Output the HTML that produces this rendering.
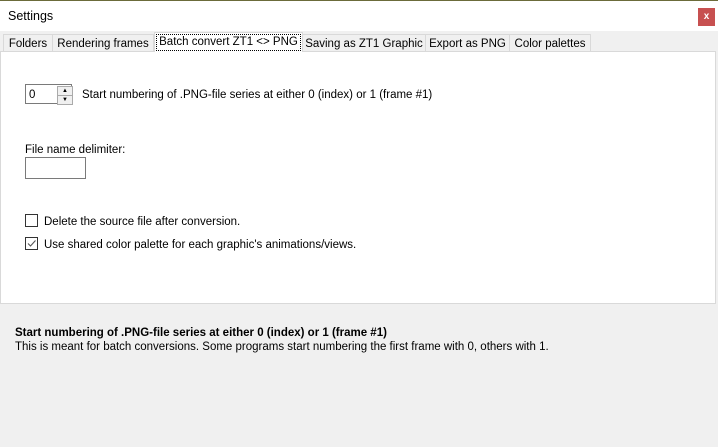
<!DOCTYPE html>
<html><head><style>
body{margin:0;width:718px;height:447px;background:#f0f0f0;font-family:"Liberation Sans",sans-serif;font-size:11.5px;color:#000;position:relative;overflow:hidden}
.a{position:absolute;white-space:nowrap}
.tab{position:absolute;top:34px;height:17px;border:1px solid #d9d9d9;border-bottom:none;background:#f0f0f0;line-height:19px;text-align:center;box-sizing:border-box}
.cb{position:absolute;width:11px;height:11px;border:1px solid #333;background:#fff}
</style></head><body>
<div class="a" style="left:0;top:0;width:718px;height:1px;background:#6b6b3a"></div>
<div class="a" style="left:0;top:1px;width:718px;height:30px;background:#fff"></div>
<div class="a" style="left:8px;top:9px;font-size:12.5px">Settings</div>
<div class="a" style="left:698px;top:8px;width:17px;height:18px;background:#c75050;color:#fff;font-size:10px;font-weight:bold;text-align:center;line-height:17px">x</div>
<div class="tab" style="left:3px;width:50px">Folders</div>
<div class="tab" style="left:52px;width:102px">Rendering frames</div>
<div class="tab" style="left:154px;width:149px;top:32px;height:20px;background:#fff;z-index:2"><span style="border:1px dotted #000;padding:0 2px;line-height:15px;display:inline-block;margin-top:1px">Batch convert ZT1 &lt;&gt; PNG</span></div>
<div class="tab" style="left:302px;width:124px">Saving as ZT1 Graphic</div>
<div class="tab" style="left:425px;width:85px">Export as PNG</div>
<div class="tab" style="left:509px;width:82px">Color palettes</div>
<div class="a" style="left:0;top:51px;width:714px;height:251px;background:#fff;border:1px solid #d9d9d9"></div>
<div class="a" style="left:25px;top:84px;width:47px;height:20px;border:1px solid #7a7a7a;background:#fff;box-sizing:border-box"></div>
<div class="a" style="left:29px;top:89px">0</div>
<div class="a" style="left:57px;top:86px;width:14px;height:8px;border:1px solid #aaa;background:#f0f0f0;font-size:6px;text-align:center;line-height:8px">▲</div>
<div class="a" style="left:57px;top:95px;width:14px;height:8px;border:1px solid #aaa;background:#f0f0f0;font-size:6px;text-align:center;line-height:8px">▼</div>
<div class="a" style="left:82px;top:89px">Start numbering of .PNG-file series at either 0 (index) or 1 (frame #1)</div>
<div class="a" style="left:25px;top:144px">File name delimiter:</div>
<div class="a" style="left:25px;top:157px;width:61px;height:22px;border:1px solid #7a7a7a;background:#fff;box-sizing:border-box"></div>
<div class="cb" style="left:25px;top:214px"></div>
<div class="a" style="left:44px;top:216px">Delete the source file after conversion.</div>
<div class="cb" style="left:25px;top:237px"><svg width="11" height="11" style="position:absolute;left:0;top:0"><path d="M2 5.5 L4.5 8 L9.5 2.5" stroke="#555" stroke-width="1.1" fill="none"/></svg></div>
<div class="a" style="left:44px;top:239px">Use shared color palette for each graphic's animations/views.</div>
<div class="a" style="left:15px;top:327px;font-weight:bold">Start numbering of .PNG-file series at either 0 (index) or 1 (frame #1)</div>
<div class="a" style="left:15px;top:341px">This is meant for batch conversions. Some programs start numbering the first frame with 0, others with 1.</div>
</body></html>
